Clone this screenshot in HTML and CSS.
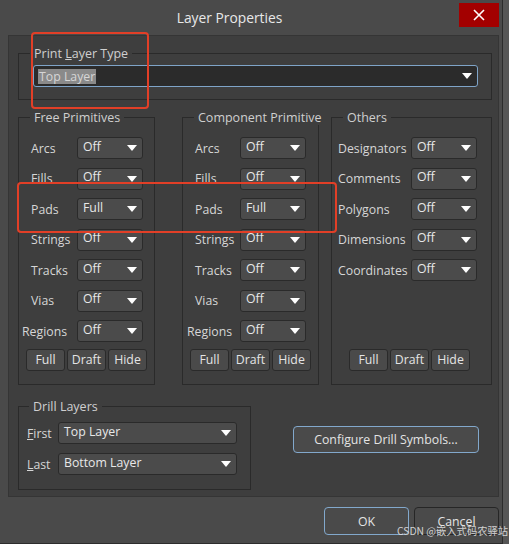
FILE: index.html
```html
<!DOCTYPE html>
<html>
<head>
<meta charset="utf-8">
<link rel="stylesheet" href="styles.css">
</head>
<body>
<div class="dialog">
  <div class="titlebar">
    <div class="title">Layer Properties</div>
    <div class="close">
      <svg width="12" height="12" viewBox="0 0 12 12"><path d="M1 1L11 11M11 1L1 11" stroke="#fff" stroke-width="1.6" fill="none"/></svg>
    </div>
  </div>

  <div class="panel">
    <fieldset class="grp grp-print">
      <legend>Print <u>L</u>ayer Type</legend>
      <div class="cb cb-main"><span class="sel">Top Layer</span><span class="arr"></span></div>
    </fieldset>

    <div class="groups">
      <fieldset class="grp prim prim-free">
        <legend>Free Primitives</legend>
        <div class="rows">
          <span class="lb">Arcs</span><div class="cb"><span class="t">Off</span><span class="arr"></span></div>
          <span class="lb">Fills</span><div class="cb"><span class="t">Off</span><span class="arr"></span></div>
          <span class="lb">Pads</span><div class="cb"><span class="t">Full</span><span class="arr"></span></div>
          <span class="lb">Strings</span><div class="cb"><span class="t">Off</span><span class="arr"></span></div>
          <span class="lb">Tracks</span><div class="cb"><span class="t">Off</span><span class="arr"></span></div>
          <span class="lb">Vias</span><div class="cb"><span class="t">Off</span><span class="arr"></span></div>
          <span class="lb lb-wide">Regions</span><div class="cb"><span class="t">Off</span><span class="arr"></span></div>
        </div>
        <div class="btnrow">
          <div class="btn sm">Full</div><div class="btn sm">Draft</div><div class="btn sm">Hide</div>
        </div>
      </fieldset>

      <fieldset class="grp prim prim-comp">
        <legend>Component Primitive</legend>
        <div class="rows">
          <span class="lb">Arcs</span><div class="cb"><span class="t">Off</span><span class="arr"></span></div>
          <span class="lb">Fills</span><div class="cb"><span class="t">Off</span><span class="arr"></span></div>
          <span class="lb">Pads</span><div class="cb"><span class="t">Full</span><span class="arr"></span></div>
          <span class="lb">Strings</span><div class="cb"><span class="t">Off</span><span class="arr"></span></div>
          <span class="lb">Tracks</span><div class="cb"><span class="t">Off</span><span class="arr"></span></div>
          <span class="lb">Vias</span><div class="cb"><span class="t">Off</span><span class="arr"></span></div>
          <span class="lb lb-wide">Regions</span><div class="cb"><span class="t">Off</span><span class="arr"></span></div>
        </div>
        <div class="btnrow">
          <div class="btn sm">Full</div><div class="btn sm">Draft</div><div class="btn sm">Hide</div>
        </div>
      </fieldset>

      <fieldset class="grp prim prim-other">
        <legend>Others</legend>
        <div class="rows">
          <span class="lb">Designators</span><div class="cb"><span class="t">Off</span><span class="arr"></span></div>
          <span class="lb">Comments</span><div class="cb"><span class="t">Off</span><span class="arr"></span></div>
          <span class="lb">Polygons</span><div class="cb"><span class="t">Off</span><span class="arr"></span></div>
          <span class="lb">Dimensions</span><div class="cb"><span class="t">Off</span><span class="arr"></span></div>
          <span class="lb">Coordinates</span><div class="cb"><span class="t">Off</span><span class="arr"></span></div>
        </div>
        <div class="btnrow">
          <div class="btn sm">Full</div><div class="btn sm">Draft</div><div class="btn sm">Hide</div>
        </div>
      </fieldset>
    </div>

    <div class="bottomrow">
      <fieldset class="grp grp-drill">
        <legend>Drill Layers</legend>
        <div class="drows">
          <span class="lb"><u>F</u>irst</span><div class="cb"><span class="t">Top Layer</span><span class="arr"></span></div>
          <span class="lb"><u>L</u>ast</span><div class="cb"><span class="t">Bottom Layer</span><span class="arr"></span></div>
        </div>
      </fieldset>
      <div class="btn btn-focus btn-config">Configure Drill Symbols...</div>
    </div>
  </div>

  <div class="footer">
    <div class="btn btn-focus btn-foot">OK</div>
    <div class="btn btn-foot btn-cancel">Cancel</div>
  </div>

  <div class="mark mark-print"></div>
  <div class="mark mark-pads"></div>
  <div class="watermark">CSDN @嵌入式码农驿站</div>
</div>
</body>
</html>
```

FILE: styles.css
```css
* { box-sizing: border-box; }
html, body { margin: 0; padding: 0; }
body {
  width: 509px;
  height: 544px;
  overflow: hidden;
  background: #565656;
  font-family: "Open Sans", "Noto Sans", sans-serif;
  font-size: 12.3px;
  color: #d8d8d8;
}
.dialog {
  position: relative;
  width: 503px;
  height: 544px;
  background: #4a4a4a;
  border-right: 1px solid #2c2c2c;
  border-bottom: 1px solid #2c2c2c;
  display: flex;
  flex-direction: column;
}
.titlebar {
  flex: none;
  height: 35px;
  display: flex;
  align-items: flex-start;
}
.title {
  flex: 1;
  text-align: center;
  line-height: 36px;
  font-size: 13.8px;
  color: #e8e8e8;
}
.close {
  width: 40px;
  height: 24px;
  margin: 3px 3px 0 0;
  background: #a30000;
  display: flex;
  align-items: center;
  justify-content: center;
}
.panel {
  flex: none;
  height: 462px;
  margin: 0 3px 0 8px;
  background: #3e3e3e;
  border: 1px solid #353535;
  padding: 10px 6px 0 9px;
  display: flex;
  flex-direction: column;
}
.grp {
  margin: 0;
  min-width: 0;
  border: 1px solid #2a2a2a;
}
legend {
  margin-left: 11px;
  padding: 0 4px;
  line-height: 15px;
  font-size: 12.5px;
  color: #cfcfcf;
  white-space: nowrap;
}
fieldset.grp-print { padding: 4px 13px 12px 14px; }
.grp-print legend { margin-left: -3px; }

.cb {
  height: 22px;
  display: flex;
  align-items: center;
  background: #4b4b4b;
  border: 1px solid #2a2a2a;
  border-radius: 3px;
  padding: 0 5px 0 5px;
  color: #e8e8e8;
  white-space: nowrap;
}
.cb .t { line-height: 18px; margin-bottom: 3px; }
.arr {
  margin-left: auto;
  width: 0;
  height: 0;
  border-left: 5px solid transparent;
  border-right: 5px solid transparent;
  border-top: 6px solid #ffffff;
}
.cb-main {
  background: #2b2b2b;
  border-color: #7fa4c8;
  padding-left: 4px;
}
.cb-main .sel {
  background: #8a8a8a;
  color: #d6d6d6;
  line-height: 15px;
  padding: 0 1px;
  margin-top: 1px;
}

.groups {
  display: flex;
  margin-top: 10px;
}
fieldset.prim {
  height: 275px;
  display: flex;
  flex-direction: column;
  padding: 12px 0 13px 0;
}
fieldset.prim-free { width: 137px; }
fieldset.prim-comp { width: 137px; margin-left: 27px; }
fieldset.prim-other { width: 161px; margin-left: 12px; }
.rows {
  display: grid;
  grid-auto-rows: 22px;
  row-gap: 8.5px;
  align-items: center;
}
.prim-free .rows { grid-template-columns: 46px 66px; padding-left: 12px; }
.prim-comp .rows { grid-template-columns: 45px 66px; padding-left: 12px; }
.prim-other .rows { grid-template-columns: 73px 66px; padding-left: 6px; }
.lb {
  line-height: 22px;
  padding-top: 1px;
  color: #d6d6d6;
  white-space: nowrap;
}
.prim-free .lb-wide { margin-left: -9px; }
.prim-comp .lb-wide { margin-left: -8px; }

.btnrow {
  margin-top: auto;
  display: flex;
  justify-content: center;
  gap: 2px;
}
.prim-other .btnrow { padding-right: 4px; }
.btn {
  display: flex;
  align-items: center;
  justify-content: center;
  background: #4a4a4a;
  border: 1px solid #2a2a2a;
  border-radius: 3px;
  color: #e4e4e4;
  white-space: nowrap;
}
.btn.sm { width: 39px; height: 22px; line-height: 18px; }
.btn-focus { border-color: #82a8cc; }

.bottomrow {
  display: flex;
  align-items: flex-start;
  margin-top: 14px;
}
fieldset.grp-drill {
  width: 233px;
  padding: 8px 13px 14px 8px;
}
.grp-drill legend { margin-left: 2px; }
.drows {
  display: grid;
  grid-template-columns: 31px 179px;
  grid-auto-rows: 22px;
  row-gap: 9px;
  align-items: center;
}
.btn-config {
  width: 186px;
  height: 27px;
  margin: 27px 13px 0 auto;
  border-radius: 4px;
}

.footer {
  flex: 1;
  display: flex;
  justify-content: flex-end;
  gap: 5px;
  padding: 10px 3px 0 0;
}
.btn-foot {
  width: 85px;
  height: 28px;
  border-radius: 4px;
}
.btn-cancel { border-color: #262626; }

.mark {
  position: absolute;
  border: 2px solid #e23f27;
  border-radius: 4px;
}
.mark-print { left: 31px; top: 32px; width: 118px; height: 77px; }
.mark-pads { left: 17px; top: 182px; width: 320px; height: 51px; }
.watermark {
  position: absolute;
  left: 397px;
  top: 524px;
  font-family: "Noto Sans CJK SC", "Noto Sans", sans-serif;
  font-size: 10.3px;
  line-height: 14px;
  color: rgba(225, 225, 225, 0.9);
  white-space: nowrap;
}
```
